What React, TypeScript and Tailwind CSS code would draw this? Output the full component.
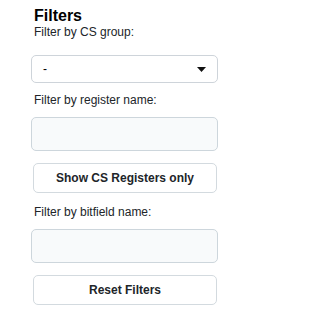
import React from "react";

export default function App() {
  return (
    <div
      className="w-[227px] h-[317px] bg-white pl-[31px] pr-[9px] pt-[6px] text-[#212529]"
      style={{ fontFamily: '"Liberation Sans", Arial, sans-serif' }}
    >
      <h2 className="text-[16px] leading-[19px] font-bold text-black pl-[3px]">Filters</h2>
      <label className="block text-[12px] leading-[14px] pl-[3px]">Filter by CS group:</label>
      <div className="mt-[16px] h-[28px] w-[187px] rounded-[5px] border border-[#ced4da] bg-white flex items-center justify-between pl-[11px] pr-[11px]">
        <span className="text-[12px] leading-[14px] text-black">-</span>
        <svg width="9" height="5" viewBox="0 0 9 5" className="block">
          <polygon points="0,0 9,0 4.5,5" fill="#111" />
        </svg>
      </div>
      <label className="block mt-[10px] text-[12px] leading-[14px] pl-[3px]">Filter by register name:</label>
      <input
        type="text"
        className="block mt-[10px] h-[34px] w-[187px] rounded-[5px] border border-[#cdd6dc] bg-[#f8fafb] outline-none"
      />
      <div className="pl-[2px]">
        <button className="block mt-[12px] h-[30px] w-[184px] rounded-[5px] border border-[#d3dadf] bg-white text-[12px] font-bold text-[#212529]">
          Show CS Registers only
        </button>
      </div>
      <label className="block mt-[12px] text-[12px] leading-[14px] pl-[3px]">Filter by bitfield name:</label>
      <input
        type="text"
        className="block mt-[10px] h-[34px] w-[187px] rounded-[5px] border border-[#cdd6dc] bg-[#f8fafb] outline-none"
      />
      <div className="pl-[2px]">
        <button className="block mt-[12px] h-[30px] w-[184px] rounded-[5px] border border-[#d3dadf] bg-white text-[12px] font-bold text-[#212529]">
          Reset Filters
        </button>
      </div>
    </div>
  );
}
